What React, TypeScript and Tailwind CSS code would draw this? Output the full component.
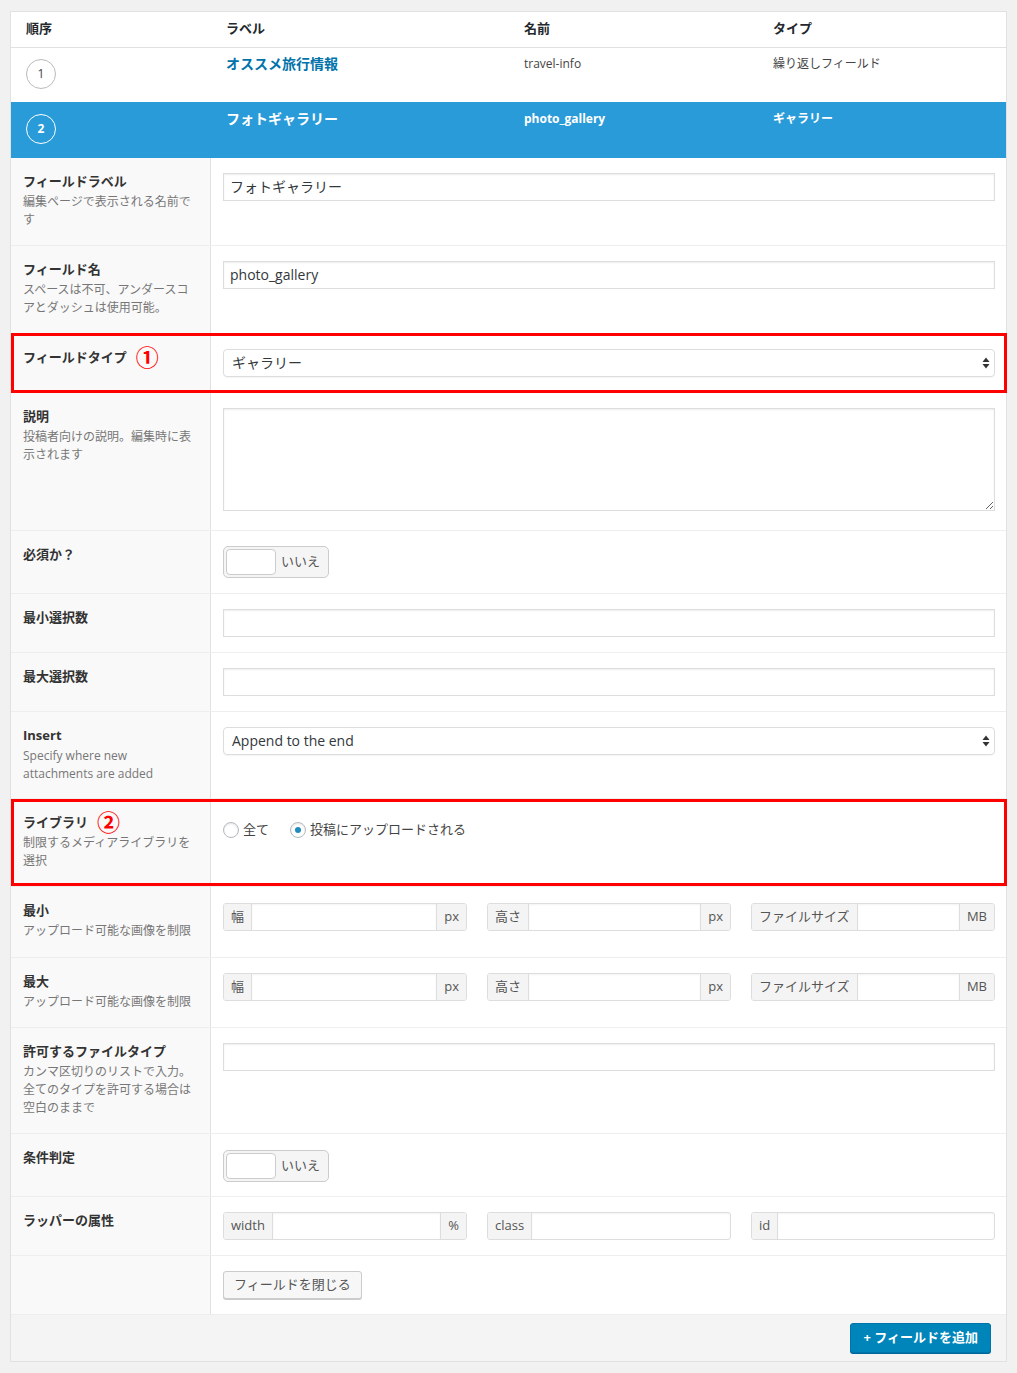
import React from 'react'

type RowProps = {
  h: string
  title?: string
  desc?: string[]
  mark?: string
  boxed?: string
  children?: React.ReactNode
  pad?: string
}

// one settings row: grey label cell on the left, control cell on the right
function Row({ h, title, desc, mark, boxed, children, pad = 'pt-[15px]' }: RowProps) {
  return (
    <div className={`relative flex border-b border-[#eeeeee] ${h}`}>
      <div className="w-[200px] shrink-0 bg-[#f9f9f9] border-r border-[#e1e1e1] px-[12px] pt-[14px]">
        {title && (
          <div className="flex items-center h-[18px]">
            <span className="text-[13px] font-bold leading-[18px] text-[#333]">{title}</span>
            {mark && (
              <span className="ml-[9px] text-[23px] font-bold leading-[18px] text-[#ff0000]">{mark}</span>
            )}
          </div>
        )}
        {desc && (
          <div className="mt-[3px] text-[12px] leading-[18px] text-[#777]">
            {desc.map((d) => (
              <div key={d}>{d}</div>
            ))}
          </div>
        )}
      </div>
      <div className={`flex-1 pl-[12px] pr-[11px] ${pad}`}>{children}</div>
      {boxed && <div className={`pointer-events-none absolute border-[3px] border-[#ff0000] ${boxed}`} />}
    </div>
  )
}

function TextInput({ value = '' }: { value?: string }) {
  return (
    <input
      readOnly
      value={value}
      className="block w-full h-[28px] border border-[#dddddd] bg-white px-[6px] pb-[2px] text-[14px] text-[#32373c] shadow-[inset_0_1px_2px_rgba(0,0,0,0.07)] outline-none"
    />
  )
}

function Select({ value }: { value: string }) {
  return (
    <div className="flex items-center justify-between h-[28px] border border-[#dddddd] rounded-[4px] bg-white pl-[8px] pr-[4px] shadow-[0_1px_1px_rgba(0,0,0,0.04)]">
      <span className="text-[14px] leading-[18px] text-[#32373c] -mt-[1px]">{value}</span>
      <svg width="8" height="12" viewBox="0 0 8 12" className="text-[#333]">
        <path d="M4 0.5 L7.5 5 H0.5 Z" fill="currentColor" />
        <path d="M4 11.5 L7.5 7 H0.5 Z" fill="currentColor" />
      </svg>
    </div>
  )
}

function Toggle() {
  return (
    <div className="inline-flex items-center h-[32px] w-[106px] border border-[#cccccc] rounded-[5px] bg-[#f5f5f5] pl-[2px]">
      <span className="w-[50px] h-[26px] bg-white border border-[#cccccc] rounded-[4px]" />
      <span className="ml-[5px] text-[13px] text-[#555]">いいえ</span>
    </div>
  )
}

function Group({ pre, post }: { pre: string; post?: string }) {
  return (
    <div className="flex h-[28px] border border-[#dddddd] rounded-[3px] overflow-hidden bg-white">
      <span className="flex items-center bg-[#f4f4f4] border-r border-[#dddddd] px-[7px] text-[13px] text-[#555]">
        {pre}
      </span>
      <span className="flex-1 shadow-[inset_0_1px_2px_rgba(0,0,0,0.05)]" />
      {post && (
        <span className="flex items-center bg-[#f4f4f4] border-l border-[#dddddd] px-[7px] text-[13px] text-[#555]">
          {post}
        </span>
      )}
    </div>
  )
}

function Radio({ checked, label }: { checked?: boolean; label: string }) {
  return (
    <label className="flex items-center">
      <span className="flex items-center justify-center w-[16px] h-[16px] rounded-full border border-[#b4b9be] bg-white shadow-[inset_0_1px_2px_rgba(0,0,0,0.1)]">
        {checked && <span className="w-[6px] h-[6px] rounded-full bg-[#1e8cbe]" />}
      </span>
      <span className="ml-[4px] text-[13px] text-[#444]">{label}</span>
    </label>
  )
}

export default function App() {
  return (
    <div className="min-h-[1373px] bg-[#f1f1f1] px-[10px] pt-[11px] pb-[11px] font-['Open_Sans','Noto_Sans_CJK_JP',sans-serif] text-[#444]">
      <div className="border border-[#e1e1e1] bg-white">
        {/* list header */}
        <div className="grid grid-cols-[200px_298px_249px_1fr] h-[36px] border-b border-[#e1e1e1] pt-[7px] text-[13px] font-bold leading-[18px] text-[#23282d]">
          <div className="pl-[15px]">順序</div>
          <div className="pl-[15px]">ラベル</div>
          <div className="pl-[15px]">名前</div>
          <div className="pl-[15px]">タイプ</div>
        </div>

        {/* field 1 */}
        <div className="grid grid-cols-[200px_298px_249px_1fr] h-[54px] leading-[18px]">
          <div className="pl-[15px] pt-[11px]">
            <span className="flex items-center justify-center w-[30px] h-[30px] rounded-full border border-[#bbbbbb] text-[12px] text-[#444]">
              1
            </span>
          </div>
          <div className="pl-[15px] pt-[7px] text-[14px] font-bold text-[#0073aa]">オススメ旅行情報</div>
          <div className="pl-[15px] pt-[7px] text-[12px] text-[#444]">travel-info</div>
          <div className="pl-[15px] pt-[7px] text-[12px] text-[#444]">繰り返しフィールド</div>
        </div>

        {/* field 2, open */}
        <div className="grid grid-cols-[200px_298px_249px_1fr] h-[56px] bg-[#2a9bd9] leading-[18px] text-white">
          <div className="pl-[15px] pt-[12px]">
            <span className="flex items-center justify-center w-[30px] h-[30px] rounded-full border border-white text-[12px] font-bold">
              2
            </span>
          </div>
          <div className="pl-[15px] pt-[8px] text-[14px] font-bold">フォトギャラリー</div>
          <div className="pl-[15px] pt-[8px] text-[12px] font-bold">photo_gallery</div>
          <div className="pl-[15px] pt-[8px] text-[12px] font-bold">ギャラリー</div>
        </div>

        <Row h="h-[88px]" title="フィールドラベル" desc={['編集ページで表示される名前で', 'す']}>
          <TextInput value="フォトギャラリー" />
        </Row>
        <Row h="h-[88px]" title="フィールド名" desc={['スペースは不可、アンダースコ', 'アとダッシュは使用可能。']}>
          <TextInput value="photo_gallery" />
        </Row>
        <Row h="h-[59px]" title="フィールドタイプ" mark="①" boxed="-top-px left-0 -right-px -bottom-px">
          <Select value="ギャラリー" />
        </Row>
        <Row h="h-[138px]" title="説明" desc={['投稿者向けの説明。編集時に表', '示されます']}>
          <textarea
            readOnly
            className="block w-full h-[103px] border border-[#dddddd] bg-white shadow-[inset_0_1px_2px_rgba(0,0,0,0.07)] outline-none resize-y"
          />
        </Row>
        <Row h="h-[63px]" title="必須か？">
          <Toggle />
        </Row>
        <Row h="h-[59px]" title="最小選択数">
          <TextInput />
        </Row>
        <Row h="h-[59px]" title="最大選択数">
          <TextInput />
        </Row>
        <Row h="h-[87px]" title="Insert" desc={['Specify where new', 'attachments are added']}>
          <Select value="Append to the end" />
        </Row>
        <Row
          h="h-[88px]"
          title="ライブラリ"
          mark="②"
          desc={['制限するメディアライブラリを', '選択']}
          boxed="top-0 left-0 -right-px bottom-0"
          pad="pt-[21px]"
        >
          <div className="flex items-center gap-[21px]">
            <Radio label="全て" />
            <Radio checked label="投稿にアップロードされる" />
          </div>
        </Row>
        <Row h="h-[71px]" title="最小" desc={['アップロード可能な画像を制限']} pad="pt-[16px]">
          <div className="grid grid-cols-3 gap-x-[20px]">
            <Group pre="幅" post="px" />
            <Group pre="高さ" post="px" />
            <Group pre="ファイルサイズ" post="MB" />
          </div>
        </Row>
        <Row h="h-[70px]" title="最大" desc={['アップロード可能な画像を制限']}>
          <div className="grid grid-cols-3 gap-x-[20px]">
            <Group pre="幅" post="px" />
            <Group pre="高さ" post="px" />
            <Group pre="ファイルサイズ" post="MB" />
          </div>
        </Row>
        <Row
          h="h-[106px]"
          title="許可するファイルタイプ"
          desc={['カンマ区切りのリストで入力。', '全てのタイプを許可する場合は', '空白のままで']}
        >
          <TextInput />
        </Row>
        <Row h="h-[63px]" title="条件判定" pad="pt-[16px]">
          <Toggle />
        </Row>
        <Row h="h-[59px]" title="ラッパーの属性">
          <div className="grid grid-cols-3 gap-x-[20px]">
            <Group pre="width" post="%" />
            <Group pre="class" />
            <Group pre="id" />
          </div>
        </Row>
        <Row h="h-[59px]">
          <button className="h-[28px] px-[10px] border border-[#cccccc] rounded-[3px] bg-[#f7f7f7] text-[13px] text-[#555] shadow-[0_1px_0_#cccccc]">
            フィールドを閉じる
          </button>
        </Row>

        {/* footer */}
        <div className="flex justify-end h-[46px] bg-[#f4f4f4] pt-[8px] pr-[15px]">
          <button className="h-[30px] px-[12px] border border-[#0073aa] rounded-[3px] bg-[#0085ba] text-[13px] font-bold text-white shadow-[0_1px_0_#006799]">
            + フィールドを追加
          </button>
        </div>
      </div>
    </div>
  )
}
